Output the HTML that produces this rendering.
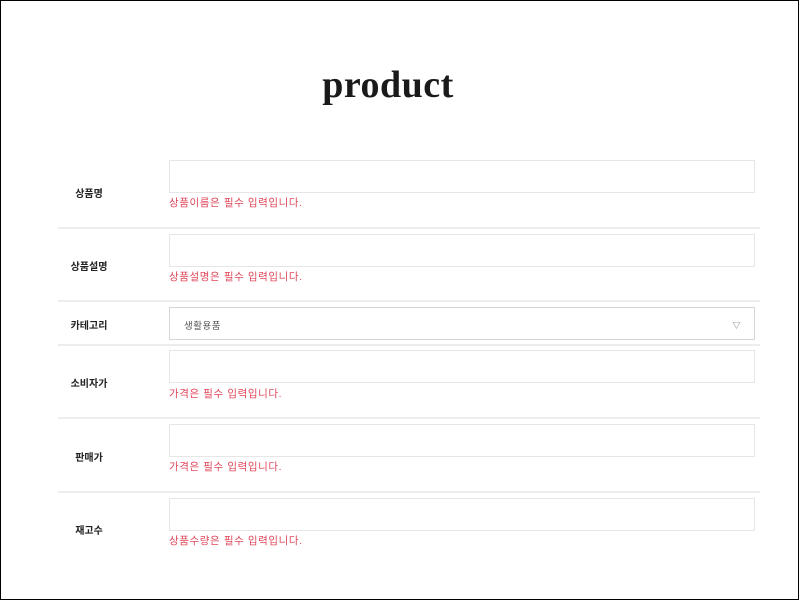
<!DOCTYPE html>
<html><head><meta charset="utf-8"><style>
*{margin:0;padding:0;box-sizing:border-box}
body{width:800px;height:600px;background:#fff;position:relative;overflow:hidden;font-family:"Liberation Sans","Noto Sans CJK KR",sans-serif}
.frame{position:absolute;left:0;top:0;width:799px;height:600px;border:1px solid #000}
h1{position:absolute;left:0;width:776px;top:63px;text-align:center;font-family:"Liberation Serif",serif;font-size:38px;font-weight:bold;color:#1a1a1a;letter-spacing:0.5px}
.lbl{position:absolute;left:58px;width:62px;text-align:center;font-size:10px;font-weight:bold;color:#222}
.in{position:absolute;left:169px;width:586px;height:33px;border:1px solid #e6e6e6;background:#fff}
.err{position:absolute;left:169px;font-size:10.5px;color:#e0475a;letter-spacing:0.6px}
.line{position:absolute;left:58px;width:702px;height:2px;background:#ededed}
.sel{font-size:9.5px;color:#555;padding:10px 0 0 14px;border-color:#d6d6d6;letter-spacing:0.5px}
.arr{position:absolute;right:13px;top:12px;font-size:8px;color:#666}
</style></head><body>
<div class="frame"></div>
<h1>product</h1>

<div class="lbl" style="top:185px">상품명</div>
<div class="in" style="top:160px"></div>
<div class="err" style="top:195px">상품이름은 필수 입력입니다.</div>
<div class="line" style="top:227px"></div>

<div class="lbl" style="top:258px">상품설명</div>
<div class="in" style="top:234px"></div>
<div class="err" style="top:269px">상품설명은 필수 입력입니다.</div>
<div class="line" style="top:300px"></div>

<div class="lbl" style="top:317px">카테고리</div>
<div class="in sel" style="top:307px">생활용품<span class="arr">▽</span></div>
<div class="line" style="top:344px"></div>

<div class="lbl" style="top:375px">소비자가</div>
<div class="in" style="top:350px"></div>
<div class="err" style="top:386px">가격은 필수 입력입니다.</div>
<div class="line" style="top:417px"></div>

<div class="lbl" style="top:449px">판매가</div>
<div class="in" style="top:424px"></div>
<div class="err" style="top:459px">가격은 필수 입력입니다.</div>
<div class="line" style="top:491px"></div>

<div class="lbl" style="top:522px">재고수</div>
<div class="in" style="top:498px"></div>
<div class="err" style="top:533px">상품수량은 필수 입력입니다.</div>
</body></html>
